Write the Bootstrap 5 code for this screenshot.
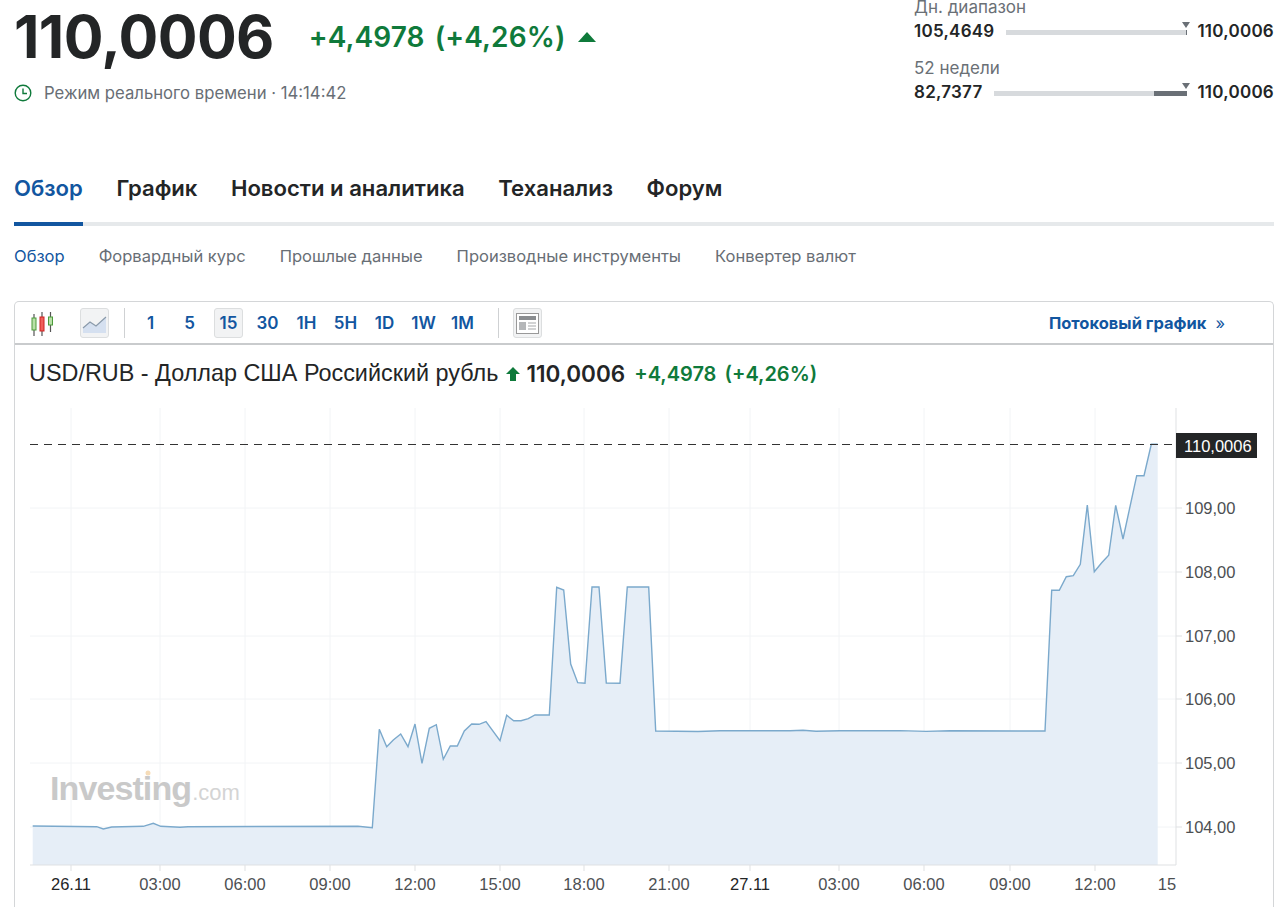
<!DOCTYPE html>
<html lang="ru">
<head>
    <meta charset="UTF-8">
    <meta name="viewport" content="width=device-width, initial-scale=1.0">
    <title>USD/RUB</title>
    <link href="https://cdn.jsdelivr.net/npm/bootstrap@5.3.0/dist/css/bootstrap.min.css" rel="stylesheet">
    <style>
        html, body { height: 907px; overflow: hidden; }
        body { font-family: Inter, "Liberation Sans", sans-serif; color: #232526; background: #fff; }
        .page-wrap { padding: 0 6px 0 14px; }
        .quote-head { height: 124px; }
        .price-main { font-size: 59px; font-weight: 700; line-height: 74px; letter-spacing: -0.6px; }
        .price-change { font-size: 28px; font-weight: 600; color: #0f7a3b; margin-left: 35px; word-spacing: 3px; letter-spacing: .1px; }
        .price-tri { width: 0; height: 0; border-left: 9px solid transparent; border-right: 9px solid transparent; border-bottom: 10px solid #0f7a3b; margin-left: 13px; }
        .live-line { font-size: 16.7px; color: #686e75; line-height: 20px; margin-top: 9px; }
        .clock-ico { margin-right: 12px; }
        .range-box { width: 360px; }
        .range-label { font-size: 17px; line-height: 14px; color: #6a7076; }
        .range-row { font-size: 17px; font-weight: 600; line-height: 20px; margin-top: 7px; margin-bottom: 20px; letter-spacing: .25px; }
        .range-track { height: 5px; background: #d7dadd; position: relative; margin: 2px 10px 0 11px; }
        .range-fill { height: 5px; background: #6a7076; position: absolute; right: 0; top: 0; }
        .range-mark { position: absolute; right: -3px; top: -8px; width: 0; height: 0; border-left: 4px solid transparent; border-right: 4px solid transparent; border-bottom: 0; border-top: 6px solid #6a7076; }
        .main-tabs { margin-top: 40px; border-bottom: 4px solid #e6e9eb; gap: 33.5px; height: 62px; }
        .main-tabs .nav-link { padding: 0; height: 62px; line-height: 48px; font-size: 22.1px; font-weight: 600; color: #232526; margin-bottom: -4px; }
        .main-tabs .nav-link.active { color: #1256a0; border-bottom: 4px solid #1256a0; }
        .sub-tabs { gap: 34px; margin-top: 18px; height: 24px; }
        .sub-tabs .nav-link { padding: 0; font-size: 16.55px; line-height: 24px; color: #686e75; }
        .sub-tabs .nav-link.active { color: #1256a0; }
        .chart-box { margin-top: 33px; border: 1px solid #d4d6d8; border-bottom: 0; border-radius: 5px 5px 0 0; }
        .chart-tools { height: 43px; border-bottom: 2px solid #c9cbcd; padding-left: 15px; padding-top: 1px; }
        .candle-ico { margin-top: 3px; }
        .tool-btn { width: 29px; height: 30px; padding: 0; border: 1px solid transparent; border-radius: 3px; font-size: 17px; font-weight: 600; line-height: 28px; color: #1256a0; text-align: center; }
        .tool-btn.is-on { background: #f2f3f4; border-color: #dcdedf; }
        .tool-area { margin-left: 24px; }
        .tool-sep { width: 1px; height: 30px; background: #cfd1d3; }
        .tool-sep-a { margin: 0 11px 0 15px; }
        .tool-sep-b { margin: 0 14px 0 21px; }
        .tool-times { gap: 10px; }
        .tool-stream { font-size: 16.5px; font-weight: 700; color: #1256a0; text-decoration: none; margin-right: 48px; }
        .tool-stream span { font-weight: 400; margin-left: 5px; }
        .chart-title { height: 50px; padding: 8px 0 0 14px; font-family: "Liberation Sans", sans-serif; font-size: 23.4px; white-space: nowrap; }
        .chart-title b { font-family: Inter, sans-serif; font-size: 22.5px; font-weight: 600; margin-left: 6px; }
        .chart-title i { font-family: Inter, sans-serif; font-style: normal; font-size: 20px; font-weight: 600; color: #0f7a3b; margin-left: 9px; word-spacing: 3px; }
        .chart-svg { display: block; width: 1258px; height: 512px; }
        .axis-txt { font-family: "Liberation Sans", sans-serif; font-size: 16.5px; fill: #4c4f52; }
        .axis-dark { fill: #232526; }
        .axis-light { fill: #fff; }
    </style>
</head>
<body>
    <div class="page-wrap">
        <!-- шапка с котировкой -->
        <div class="quote-head d-flex justify-content-between">
            <div>
                <div class="d-flex align-items-center">
                    <span class="price-main">110,0006</span>
                    <span class="price-change">+4,4978 (+4,26%)</span>
                    <span class="price-tri"></span>
                </div>
                <div class="live-line d-flex align-items-center">
                    <svg width="18" height="18" viewBox="0 0 18 18" class="clock-ico flex-shrink-0">
                        <circle cx="9" cy="9" r="7.8" fill="none" stroke="#0f7a3b" stroke-width="1.4"/>
                        <path d="M9 4.5V9.5H13" fill="none" stroke="#0f7a3b" stroke-width="1.4"/>
                    </svg>
                    <span>Режим реального времени · 14:14:42</span>
                </div>
            </div>
            <div class="range-box">
                <div class="range-label">Дн. диапазон</div>
                <div class="range-row d-flex align-items-center">
                    <span>105,4649</span>
                    <div class="range-track flex-grow-1"><div class="range-fill" style="width:1%"></div><div class="range-mark"></div></div>
                    <span>110,0006</span>
                </div>
                <div class="range-label">52 недели</div>
                <div class="range-row d-flex align-items-center">
                    <span>82,7377</span>
                    <div class="range-track flex-grow-1"><div class="range-fill" style="width:17%"></div><div class="range-mark"></div></div>
                    <span>110,0006</span>
                </div>
            </div>
        </div>

        <!-- вкладки -->
        <ul class="nav main-tabs">
            <li class="nav-item"><a class="nav-link active" href="#">Обзор</a></li>
            <li class="nav-item"><a class="nav-link" href="#">График</a></li>
            <li class="nav-item"><a class="nav-link" href="#">Новости и аналитика</a></li>
            <li class="nav-item"><a class="nav-link" href="#">Теханализ</a></li>
            <li class="nav-item"><a class="nav-link" href="#">Форум</a></li>
        </ul>
        <ul class="nav sub-tabs">
            <li class="nav-item"><a class="nav-link active" href="#">Обзор</a></li>
            <li class="nav-item"><a class="nav-link" href="#">Форвардный курс</a></li>
            <li class="nav-item"><a class="nav-link" href="#">Прошлые данные</a></li>
            <li class="nav-item"><a class="nav-link" href="#">Производные инструменты</a></li>
            <li class="nav-item"><a class="nav-link" href="#">Конвертер валют</a></li>
        </ul>

        <!-- график -->
        <div class="chart-box">
            <div class="chart-tools d-flex align-items-center">
                <svg width="26" height="26" viewBox="0 0 26 26" class="candle-ico flex-shrink-0">
                    <path d="M4 2V24M12 0V24M20.500 0V20" stroke="#555" stroke-width="1.2"/>
                    <rect x="2" y="6" width="4" height="12" fill="#b8e0a8" stroke="#4c9a3a"/>
                    <rect x="10" y="5" width="4" height="14" fill="#f0605a" stroke="#c22"/>
                    <rect x="18.500" y="5" width="4" height="8" fill="#b8e0a8" stroke="#4c9a3a"/>
                </svg>
                <div class="tool-btn tool-area is-on d-flex align-items-center justify-content-center">
                    <svg width="25" height="22" viewBox="0 0 25 22">
                        <path d="M1 16L8 10L14 14L24 5V21H1Z" fill="#d5e0f0"/>
                        <path d="M1 16L8 10L14 14L24 5" fill="none" stroke="#8a9aaa" stroke-width="1.2"/>
                    </svg>
                </div>
                <div class="tool-sep tool-sep-a"></div>
                <div class="d-flex tool-times">
                    <div class="tool-btn">1</div>
                    <div class="tool-btn">5</div>
                    <div class="tool-btn is-on">15</div>
                    <div class="tool-btn">30</div>
                    <div class="tool-btn">1H</div>
                    <div class="tool-btn">5H</div>
                    <div class="tool-btn">1D</div>
                    <div class="tool-btn">1W</div>
                    <div class="tool-btn">1M</div>
                </div>
                <div class="tool-sep tool-sep-b"></div>
                <div class="tool-btn is-on d-flex align-items-center justify-content-center">
                    <svg width="23" height="21" viewBox="0 0 23 21">
                        <rect x=".5" y=".5" width="22" height="20" fill="#fff" stroke="#999"/>
                        <rect x="3" y="3" width="17" height="4" fill="#8a8d90"/>
                        <rect x="3" y="9" width="7" height="8" fill="#b5b7b9"/>
                        <path d="M12 10H20M12 13H20M12 16H20" stroke="#a5a7a9" stroke-width="1.2"/>
                    </svg>
                </div>
                <a class="tool-stream ms-auto" href="#">Потоковый график <span>»</span></a>
            </div>
            <div class="chart-title d-flex align-items-center">
                USD/RUB - Доллар США Российский рубль
                <svg width="14" height="14" viewBox="0 0 14 14" class="ms-2 flex-shrink-0"><path d="M7 0L14 7H10V14H4V7H0Z" fill="#0f7a3b"/></svg>
                <b>110,0006</b>
                <i>+4,4978 (+4,26%)</i>
            </div>
            <svg class="chart-svg" viewBox="15 395 1258 512">
                <g stroke="#f2f4f6" stroke-width="1">
                    <path d="M30 508H1176M30 572H1176M30 636H1176M30 699H1176M30 763H1176M30 827H1176"/>
                    <path d="M71 408V865M160 408V865M245 408V865M330 408V865M415 408V865M500 408V865M584 408V865M669 408V865M750 408V865M839 408V865M924 408V865M1010 408V865M1095 408V865"/>
                </g>
                <polygon fill="#e6eef7" points="32.7,865 32.7,826 96.7,826.7 103.3,829 111.7,827 143.3,826.3 153.3,823.3 160.7,826.3 180,827.3 188,826.7 358,826.3 372.3,827.7 379.3,729.3 386.7,746.7 393.3,740 400.7,734 408,746.7 415,724 422,763.3 429.3,728.3 436.3,724.7 443.3,759.3 450.3,746 457.3,746 464.3,731 471.7,724 479,724.3 486,721.7 500,740.7 506.7,715.3 513.7,720.7 521,720.7 528.3,718.7 535,715 549.3,715 556.7,587.3 563.7,590 570.7,664 577.7,682.7 585,683.3 592,587 599,587 606.3,683 620,683.3 627.3,587 648.7,587 655.7,731 698,731.5 720,730.8 790,730.8 803,730.3 816,731.3 840,730.8 900,730.6 926,731.4 950,730.8 1045,731 1051.7,590.3 1059.3,590.3 1066.3,576.7 1073.3,575.7 1080.3,564.3 1087.3,505 1094.3,571.7 1101.7,562.7 1108.7,555.3 1115.7,505.3 1123,539 1136.7,475.7 1144,475.7 1151.3,444.3 1157.7,444.3 1157.7,865"/>
                <polyline fill="none" stroke="#7ba9cc" stroke-width="1.4" points="32.7,826 96.7,826.7 103.3,829 111.7,827 143.3,826.3 153.3,823.3 160.7,826.3 180,827.3 188,826.7 358,826.3 372.3,827.7 379.3,729.3 386.7,746.7 393.3,740 400.7,734 408,746.7 415,724 422,763.3 429.3,728.3 436.3,724.7 443.3,759.3 450.3,746 457.3,746 464.3,731 471.7,724 479,724.3 486,721.7 500,740.7 506.7,715.3 513.7,720.7 521,720.7 528.3,718.7 535,715 549.3,715 556.7,587.3 563.7,590 570.7,664 577.7,682.7 585,683.3 592,587 599,587 606.3,683 620,683.3 627.3,587 648.7,587 655.7,731 698,731.5 720,730.8 790,730.8 803,730.3 816,731.3 840,730.8 900,730.6 926,731.4 950,730.8 1045,731 1051.7,590.3 1059.3,590.3 1066.3,576.7 1073.3,575.7 1080.3,564.3 1087.3,505 1094.3,571.7 1101.7,562.7 1108.7,555.3 1115.7,505.3 1123,539 1136.7,475.7 1144,475.7 1151.3,444.3 1157.7,444.3"/>
                <path d="M1176 408V865M30 865H1176" stroke="#dfe1e3" fill="none"/>
                <path d="M71 865V871M160 865V871M245 865V871M330 865V871M415 865V871M500 865V871M584 865V871M669 865V871M750 865V871M839 865V871M924 865V871M1010 865V871M1095 865V871M1176 508H1182M1176 572H1182M1176 636H1182M1176 699H1182M1176 763H1182M1176 827H1182" stroke="#dfe1e3" fill="none"/>
                <path d="M30 444.5H1176" stroke="#333" stroke-dasharray="8 6" fill="none"/>
                <!-- водяной знак -->
                <text x="50" y="800" font-family="Liberation Sans, sans-serif" font-size="34" font-weight="700" fill="#c9c9c9" letter-spacing="-.9">Investing<tspan font-size="22" font-weight="400" letter-spacing="0" fill="#d4d4d4" dx="1">.com</tspan></text>
                <circle cx="148" cy="773" r="2.5" fill="#f6dcb8"/>
                <!-- подписи осей -->
                <rect x="1176" y="433" width="81" height="25" fill="#232526"/>
                <text x="1184" y="451.5" class="axis-txt axis-light">110,0006</text>
                <text x="1185" y="514" class="axis-txt">109,00</text>
                <text x="1185" y="578" class="axis-txt">108,00</text>
                <text x="1185" y="642" class="axis-txt">107,00</text>
                <text x="1185" y="705" class="axis-txt">106,00</text>
                <text x="1185" y="769" class="axis-txt">105,00</text>
                <text x="1185" y="833" class="axis-txt">104,00</text>
                <g text-anchor="middle">
                    <text x="71" y="890" class="axis-txt axis-dark">26.11</text>
                    <text x="160" y="890" class="axis-txt">03:00</text>
                    <text x="245" y="890" class="axis-txt">06:00</text>
                    <text x="330" y="890" class="axis-txt">09:00</text>
                    <text x="415" y="890" class="axis-txt">12:00</text>
                    <text x="500" y="890" class="axis-txt">15:00</text>
                    <text x="584" y="890" class="axis-txt">18:00</text>
                    <text x="669" y="890" class="axis-txt">21:00</text>
                    <text x="750" y="890" class="axis-txt axis-dark">27.11</text>
                    <text x="839" y="890" class="axis-txt">03:00</text>
                    <text x="924" y="890" class="axis-txt">06:00</text>
                    <text x="1010" y="890" class="axis-txt">09:00</text>
                    <text x="1095" y="890" class="axis-txt">12:00</text>
                    <text x="1167" y="890" class="axis-txt">15</text>
                </g>
            </svg>
        </div>
    </div>
    <script src="https://cdn.jsdelivr.net/npm/bootstrap@5.3.0/dist/js/bootstrap.bundle.min.js"></script>
</body>
</html>
